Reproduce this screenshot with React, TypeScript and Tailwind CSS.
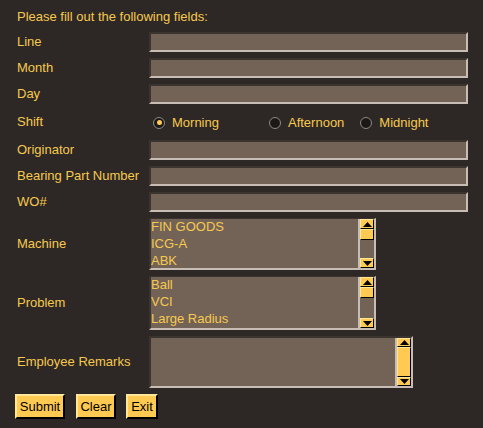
import { useState } from 'react';

const font = { fontFamily: '"Liberation Sans", Arial, sans-serif' };

function Field({ label, children, h = 'h-[20px]' }: { label: string; children: React.ReactNode; h?: string }) {
  return (
    <div className={`flex items-center ${h}`}>
      <span className="w-[134px] shrink-0 pl-[2px] text-[13px] text-[#f6c94f]">{label}</span>
      {children}
    </div>
  );
}

function TextBox() {
  return (
    <div className="h-[20px] w-[319px] border-t-2 border-l-2 border-r-2 border-b-2 border-t-[#3b332e] border-l-[#3b332e] border-r-[#c8bdb5] border-b-[#c8bdb5] bg-[#736357]" />
  );
}

function Arrow({ up }: { up?: boolean }) {
  return (
    <div className="flex h-[10px] w-[14px] items-center justify-center border border-t-[#ffe79a] border-l-[#ffe79a] border-r-black border-b-black bg-[#ffc952]">
      <svg width="9" height="5" viewBox="0 0 9 5">
        {up ? <path d="M4.5 0 L9 5 L0 5 Z" fill="#000" /> : <path d="M0 0 L9 0 L4.5 5 Z" fill="#000" />}
      </svg>
    </div>
  );
}

function ScrollBar({ thumb }: { thumb: string }) {
  return (
    <div className="flex h-full w-[16px] shrink-0 flex-col border-l-2 border-[#c8bdb5] bg-[#736357]">
      <Arrow up />
      <div className={`${thumb} w-[14px] border border-t-[#ffe79a] border-l-[#ffe79a] border-r-black border-b-black bg-[#ffc952]`} />
      <div className="flex-1" />
      <Arrow />
    </div>
  );
}

function ListBox({ items, h }: { items: string[]; h: string }) {
  return (
    <div className={`flex ${h} w-[227px] border-t border-l-2 border-b-2 border-r-2 border-t-[#3b332e] border-l-[#3b332e] border-b-[#c8bdb5] border-r-[#c8bdb5] bg-[#736357]`}>
      <div className="flex-1">
        {items.map((it) => (
          <div key={it} className="h-[17px] text-[13px] leading-[16px] text-[#f6c94f]">
            {it}
          </div>
        ))}
      </div>
      <ScrollBar thumb="h-[11px]" />
    </div>
  );
}

function Radio({ label, checked, onClick }: { label: string; checked: boolean; onClick: () => void }) {
  return (
    <button onClick={onClick} className="flex items-center gap-[7px] text-[13px] text-[#f6c94f]">
      <span className="flex h-[12px] w-[12px] items-center justify-center rounded-full border border-[#8c8a88] bg-[#1c1816]">
        {checked && <span className="h-[5px] w-[5px] rounded-full bg-[#ffc952]" />}
      </span>
      {label}
    </button>
  );
}

function YButton({ label, w }: { label: string; w: string }) {
  return (
    <button className={`h-[25px] ${w} border-2 border-t-[#ffe79a] border-l-[#ffe79a] border-r-black border-b-black bg-[#ffc952] text-[13px] text-black`}>
      {label}
    </button>
  );
}

export default function App() {
  const [shift, setShift] = useState('Morning');
  return (
    <div style={font} className="h-[428px] w-[483px] bg-[#2d2825] pl-[15px] pt-[9px]">
      <p className="mb-[7px] h-[16px] pl-[2px] text-[13px] leading-[16px] text-[#f6c94f]">Please fill out the following fields:</p>
      <div className="flex flex-col gap-[6px]">
        <Field label="Line"><TextBox /></Field>
        <Field label="Month"><TextBox /></Field>
        <Field label="Day"><TextBox /></Field>
        <Field label="Shift" h="h-[24px]">
          <div className="flex items-center pl-[4px] pt-[1px]">
            <Radio label="Morning" checked={shift === 'Morning'} onClick={() => setShift('Morning')} />
            <div className="w-[50px]" />
            <Radio label="Afternoon" checked={shift === 'Afternoon'} onClick={() => setShift('Afternoon')} />
            <div className="w-[16px]" />
            <Radio label="Midnight" checked={shift === 'Midnight'} onClick={() => setShift('Midnight')} />
          </div>
        </Field>
        <Field label="Originator"><TextBox /></Field>
        <Field label="Bearing Part Number"><TextBox /></Field>
        <Field label="WO#"><TextBox /></Field>
        <Field label="Machine" h="h-[52px]">
          <ListBox h="h-[52px]" items={['FIN GOODS', 'ICG-A', 'ABK']} />
        </Field>
        <Field label="Problem" h="h-[54px]">
          <ListBox h="h-[54px]" items={['Ball', 'VCI', 'Large Radius']} />
        </Field>
        <Field label="Employee Remarks" h="h-[52px]">
          <div className="flex h-[52px] w-[264px] border-t-2 border-l-2 border-b-2 border-r-2 border-t-[#3b332e] border-l-[#3b332e] border-b-[#c8bdb5] border-r-[#c8bdb5] bg-[#736357]">
            <div className="flex-1" />
            <ScrollBar thumb="h-[31px]" />
          </div>
        </Field>
        <div className="flex h-[25px] items-center">
          <YButton label="Submit" w="w-[50px]" />
          <div className="w-[11px]" />
          <YButton label="Clear" w="w-[40px]" />
          <div className="w-[10px]" />
          <YButton label="Exit" w="w-[32px]" />
        </div>
      </div>
    </div>
  );
}
